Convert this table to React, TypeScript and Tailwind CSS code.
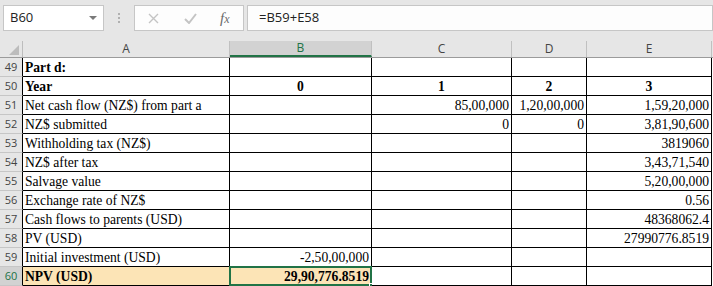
import React from 'react';

type Cell = { v?: string; bold?: boolean; align?: 'left' | 'right' | 'center' };

const cols = [
  { key: 'A', w: 'w-[207px]' },
  { key: 'B', w: 'w-[142px]' },
  { key: 'C', w: 'w-[140px]' },
  { key: 'D', w: 'w-[75px]' },
  { key: 'E', w: 'w-[125px]' },
];

const rows: { n: number; cells: Cell[] }[] = [
  { n: 49, cells: [{ v: 'Part d:', bold: true }, {}, {}, {}, {}] },
  {
    n: 50,
    cells: [
      { v: 'Year', bold: true },
      { v: '0', bold: true, align: 'center' },
      { v: '1', bold: true, align: 'center' },
      { v: '2', bold: true, align: 'center' },
      { v: '3', bold: true, align: 'center' },
    ],
  },
  {
    n: 51,
    cells: [
      { v: 'Net cash flow (NZ$) from part a' },
      {},
      { v: '85,00,000', align: 'right' },
      { v: '1,20,00,000', align: 'right' },
      { v: '1,59,20,000', align: 'right' },
    ],
  },
  {
    n: 52,
    cells: [
      { v: 'NZ$ submitted' },
      {},
      { v: '0', align: 'right' },
      { v: '0', align: 'right' },
      { v: '3,81,90,600', align: 'right' },
    ],
  },
  { n: 53, cells: [{ v: 'Withholding tax (NZ$)' }, {}, {}, {}, { v: '3819060', align: 'right' }] },
  { n: 54, cells: [{ v: 'NZ$ after tax' }, {}, {}, {}, { v: '3,43,71,540', align: 'right' }] },
  { n: 55, cells: [{ v: 'Salvage value' }, {}, {}, {}, { v: '5,20,00,000', align: 'right' }] },
  { n: 56, cells: [{ v: 'Exchange rate of NZ$' }, {}, {}, {}, { v: '0.56', align: 'right' }] },
  { n: 57, cells: [{ v: 'Cash flows to parents (USD)' }, {}, {}, {}, { v: '48368062.4', align: 'right' }] },
  { n: 58, cells: [{ v: 'PV (USD)' }, {}, {}, {}, { v: '27990776.8519', align: 'right' }] },
  { n: 59, cells: [{ v: 'Initial investment (USD)' }, { v: '-2,50,00,000', align: 'right' }, {}, {}, {}] },
  {
    n: 60,
    cells: [
      { v: 'NPV (USD)', bold: true },
      { v: '29,90,776.8519', bold: true, align: 'right' },
      {},
      {},
      {},
    ],
  },
];

function Toolbar() {
  return (
    <div className="h-[41px] bg-[#e6e6e6] flex items-start pt-[5px] pl-[3px]">
      <div className="w-[101px] h-[26px] bg-white border border-[#c6c6c6] flex items-center pl-[6px] text-[13px] text-[#222]">
        <span>B60</span>
        <span className="ml-auto mr-[6px] w-0 h-0 border-l-[4px] border-r-[4px] border-t-[4px] border-l-transparent border-r-transparent border-t-[#7a7a7a]" />
      </div>
      <div className="w-[30px] h-[26px] flex flex-col items-center justify-center gap-[2px]">
        <span className="w-[2px] h-[2px] bg-[#b0b0b0]" />
        <span className="w-[2px] h-[2px] bg-[#b0b0b0]" />
        <span className="w-[2px] h-[2px] bg-[#b0b0b0]" />
      </div>
      <div className="w-[110px] h-[26px] bg-[#fdfdfd] border border-[#c6c6c6] flex items-center">
        <svg className="ml-[13px]" width="11" height="11" viewBox="0 0 11 11">
          <path d="M1 1 L10 10 M10 1 L1 10" stroke="#c4c4c4" strokeWidth="1.4" fill="none" />
        </svg>
        <svg className="ml-[25px]" width="13" height="11" viewBox="0 0 13 11">
          <path d="M1 6 L5 10 L12 1" stroke="#c4c4c4" strokeWidth="2" fill="none" />
        </svg>
        <span className="ml-[23px] text-[15px] italic text-[#6a6a6a] font-['Liberation_Serif',serif] leading-none">
          f<span className="text-[12px]">x</span>
        </span>
      </div>
      <div className="ml-[3px] flex-1 h-[26px] bg-[#fdfdfd] border border-[#c6c6c6] flex items-center pl-[11px] text-[13px] text-[#222]">
        =B59+E58
      </div>
    </div>
  );
}

function HeaderRow() {
  return (
    <div className="flex h-[16px] bg-[#e6e6e6] border-b border-[#9b9b9b] box-content">
      <div className="w-[23px] h-full border-r border-[#bdbdbd] relative">
        <svg className="absolute right-[3px] bottom-[2px]" width="10" height="10" viewBox="0 0 10 10">
          <path d="M10 0 L10 10 L0 10 Z" fill="#bcbcbc" />
        </svg>
      </div>
      {cols.map((c) => {
        const sel = c.key === 'B';
        return (
          <div
            key={c.key}
            className={`${c.w} h-full flex items-center justify-center text-[12px] border-r border-[#c0c0c0] ${
              sel ? 'bg-[#d2d2d2] text-[#217346] border-b-2 border-b-[#217346]' : 'text-[#444]'
            }`}
          >
            {c.key}
          </div>
        );
      })}
    </div>
  );
}

export default function App() {
  return (
    <div className="w-[713px] h-[286px] overflow-hidden bg-white font-['Open_Sans','Liberation_Sans',sans-serif]">
      <Toolbar />
      <HeaderRow />
      {rows.map((r) => {
        const last = r.n === 60;
        return (
          <div key={r.n} className="flex h-[19px]">
            <div
              className={`w-[23px] h-full flex items-center justify-center text-[11px] border-r border-b border-r-black border-b-[#c6c6c6] ${
                last ? 'bg-[#d2d2d2] text-[#217346]' : 'bg-[#e6e6e6] text-[#444]'
              }`}
            >
              {r.n}
            </div>
            {r.cells.map((c, i) => {
              const isB60 = last && i === 1;
              const fill = last && i < 2 ? 'bg-[#fce4b6]' : 'bg-white';
              const align =
                c.align === 'right' ? 'justify-end' : c.align === 'center' ? 'justify-center' : 'justify-start';
              return (
                <div
                  key={i}
                  className={`${cols[i].w} h-full relative flex items-end ${align} px-[2px] border-r border-b border-black ${fill} font-['Liberation_Serif',serif] text-[13.6px] leading-[17px] text-black whitespace-nowrap ${
                    c.bold ? 'font-bold' : ''
                  }`}
                >
                  {c.v}
                  {isB60 && (
                    <>
                      <span className="absolute -left-[1px] -top-[1px] -right-[1px] -bottom-[1px] border-2 border-[#217346] pointer-events-none" />
                      <span className="absolute -right-[4px] -bottom-[4px] w-[6px] h-[6px] bg-[#217346] border border-white" />
                    </>
                  )}
                </div>
              );
            })}
          </div>
        );
      })}
    </div>
  );
}
